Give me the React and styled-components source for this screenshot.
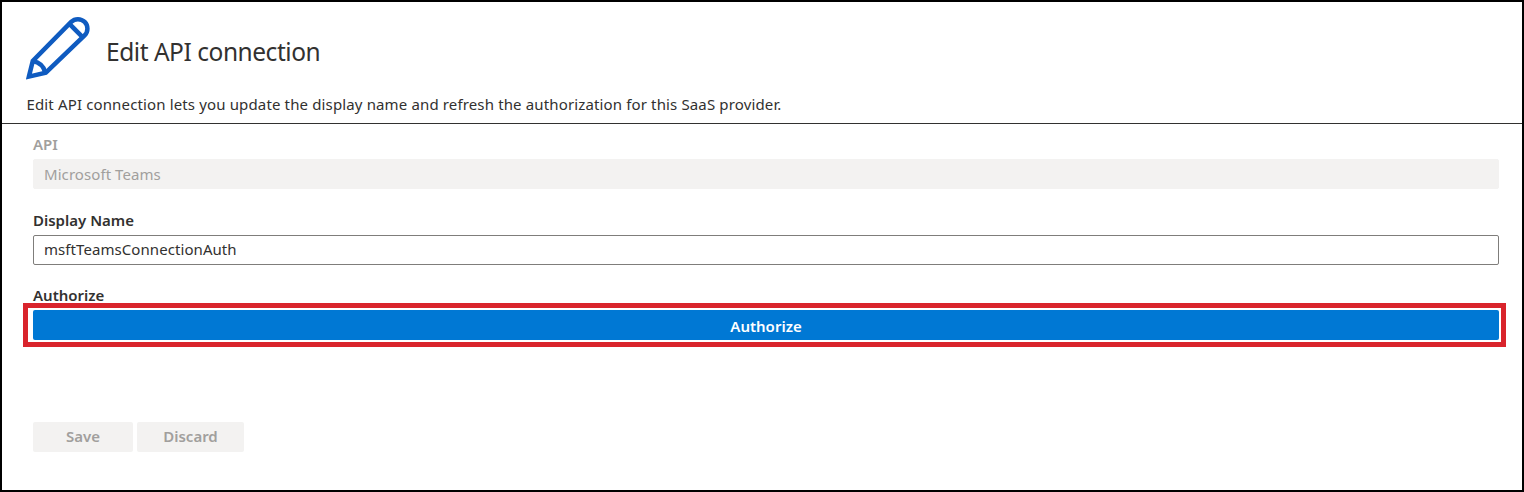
import React from "react";
import styled, { createGlobalStyle } from "styled-components";

const GlobalStyle = createGlobalStyle`
  *, *::before, *::after { box-sizing: border-box; }
  body { margin: 0; background: #fff; }
`;

const Blade = styled.main`
  display: flex;
  flex-direction: column;
  height: 492px;
  border: 2px solid #000;
  background: #fff;
  color: #323130;
  font-family: "Noto Sans", "Open Sans", sans-serif;
  font-size: 15px;
  line-height: 20px;
  overflow: hidden;
`;

const Header = styled.header`
  height: 122px;
  padding: 14px 24px 0;
  border-bottom: 1px solid #323130;
`;

const TitleRow = styled.div`
  display: flex;
  align-items: flex-start;
  gap: 16px;
`;

const PencilIcon = styled.svg`
  width: 64px;
  height: 65px;
  flex: none;
  fill: none;
  stroke: #0f5bc0;
  stroke-width: 4.5;
`;

const Title = styled.h1`
  margin: 18px 0 0;
  font-size: 24.5px;
  font-weight: 400;
  line-height: 36px;
  letter-spacing: ${(p) => p.$tracking}px;
  white-space: nowrap;
`;

const Description = styled.p`
  margin: 13px 0 0;
  padding-left: 0.5px;
  font-size: 15px;
  font-weight: 400;
  line-height: 20px;
  letter-spacing: ${(p) => p.$tracking}px;
  white-space: nowrap;
`;

const Form = styled.form`
  padding: 10px 23px 0 31px;
`;

const Field = styled.div`
  display: flex;
  flex-direction: column;
  margin-bottom: ${(p) => p.$gap}px;
`;

const Label = styled.label`
  height: 25px;
  font-weight: 600;
  color: ${(p) => (p.$muted ? "#a19f9d" : "#323130")};
`;

const TextInput = styled.input`
  width: 100%;
  height: 30px;
  padding: 0 10px 2px;
  border: 1px solid #7f7d7b;
  border-radius: 2px;
  background: #fff;
  color: #323130;
  font: inherit;
  letter-spacing: 0.07px;
  outline: none;

  &:disabled {
    padding-bottom: 1px;
    border-color: #f3f2f1;
    background: #f3f2f1;
    color: #a19f9d;
  }
`;

const Highlight = styled.div`
  height: 44px;
  margin: -7px -7px 0 -10px;
  padding: 2px 2px 2px 5px;
  border: 5px solid #d9242c;
`;

const Button = styled.button`
  width: ${(p) => p.$width};
  height: 30px;
  padding: 1px 0 0;
  border: 0;
  border-radius: 2px;
  background: #0078d4;
  color: #fff;
  font: inherit;
  font-weight: 600;

  &:disabled {
    padding: 0 0 2px;
    background: #f3f2f1;
    color: #a19f9d;
  }
`;

const Actions = styled.div`
  display: flex;
  gap: 4px;
`;

export default function App() {
  return (
    <>
      <GlobalStyle />
      <Blade>
        <Header>
          <TitleRow>
            <PencilIcon viewBox="0 0 64 65" aria-hidden="true">
              <path d="M2.9 60.6 L6.8 45 L45.2 5.9 A9.5 9.5 0 0 1 58.6 19.4 L19.8 56.6 Z" />
              <path d="M6.8 45 Q17 47 19.3 56.6" />
              <path d="M43.4 7.8 L56.6 21.2" />
            </PencilIcon>
            <Title $tracking={-0.46}>Edit API connection</Title>
          </TitleRow>
          <Description $tracking={0.14}>
            Edit API connection lets you update the display name and refresh the
            authorization for this SaaS provider.
          </Description>
        </Header>
        <Form onSubmit={(e) => e.preventDefault()}>
          <Field $gap={21}>
            <Label htmlFor="api" $muted>API</Label>
            <TextInput id="api" defaultValue="Microsoft Teams" disabled />
          </Field>
          <Field $gap={20}>
            <Label htmlFor="name">Display Name</Label>
            <TextInput id="name" defaultValue="msftTeamsConnectionAuth" />
          </Field>
          <Field $gap={75}>
            <Label htmlFor="authorize">Authorize</Label>
            <Highlight>
              <Button id="authorize" type="button" $width="100%">Authorize</Button>
            </Highlight>
          </Field>
          <Actions>
            <Button type="submit" $width="100px" disabled>Save</Button>
            <Button type="button" $width="107px" disabled>Discard</Button>
          </Actions>
        </Form>
      </Blade>
    </>
  );
}
